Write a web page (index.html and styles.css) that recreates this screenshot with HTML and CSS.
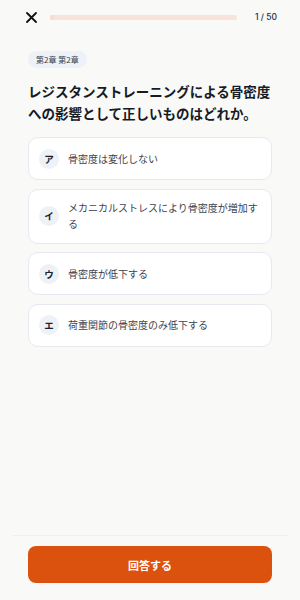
FILE: index.html
```html
<!DOCTYPE html>
<html lang="ja">
<head>
    <meta charset="UTF-8">
    <meta name="viewport" content="width=device-width, initial-scale=1.0">
    <title>問題</title>
    <link rel="stylesheet" href="styles.css">
</head>
<body>
    <div class="page">
        <header class="topbar">
            <button class="close" aria-label="閉じる">
                <svg width="11" height="11" viewBox="0 0 11 11"><path d="M1 1L10 10M10 1L1 10" stroke="#111" stroke-width="1.8" stroke-linecap="round"/></svg>
            </button>
            <div class="progress"><div class="progress-fill" style="width: 2%"></div></div>
            <span class="count">1 / 50</span>
        </header>

        <main class="content">
            <span class="chapter">第2章 第2章</span>
            <h1 class="question">レジスタンストレーニングによる骨密度への影響として正しいものはどれか。</h1>

            <ul class="options">
                <li class="option"><span class="mark">ア</span><span class="label">骨密度は変化しない</span></li>
                <li class="option"><span class="mark">イ</span><span class="label">メカニカルストレスにより骨密度が増加する</span></li>
                <li class="option"><span class="mark">ウ</span><span class="label">骨密度が低下する</span></li>
                <li class="option"><span class="mark">エ</span><span class="label">荷重関節の骨密度のみ低下する</span></li>
            </ul>
        </main>

        <footer class="footer">
            <button class="answer">回答する</button>
        </footer>
    </div>
</body>
</html>
```

FILE: styles.css
```css
* { box-sizing: border-box; }
body { margin: 0; background: #f9f9f7; font-family: "Noto Sans CJK JP", "Noto Sans", sans-serif; color: #1b2130; }
.page { width: 300px; height: 600px; display: flex; flex-direction: column; }

.topbar { display: flex; align-items: center; height: 34px; padding: 0 23px 0 25px; }
.close { border: none; background: none; padding: 0; width: 12px; height: 12px; display: flex; align-items: center; justify-content: center; }
.progress { flex: 1; height: 5px; margin: 0 18px 0 13px; background: #f8e3d8; border-radius: 3px; overflow: hidden; }
.progress-fill { height: 100%; background: #f8dccd; }
.count { font-family: "Inter", "Noto Sans", sans-serif; font-size: 8.5px; font-weight: 500; color: #1e2a3c; }

.content { flex: 1; padding: 17px 28px 0; }
.chapter { display: block; width: fit-content; height: 17px; line-height: 17px; padding: 0 8px; border-radius: 9px; background: #eef1f7; font-size: 8px; color: #333a48; }
.question { margin: 12px 0 13px; font-size: 13.5px; line-height: 22px; font-weight: 700; color: #161b26; }

.options { list-style: none; margin: 0; padding: 0; display: flex; flex-direction: column; gap: 8.5px; }
.option { display: flex; align-items: center; gap: 9px; padding: 10.5px 12px 10.5px 10px; background: #fff; border: 1px solid #e6e9f0; border-radius: 10px; }
.mark { flex: none; width: 20px; height: 20px; border-radius: 50%; background: #eef1f6; display: flex; align-items: center; justify-content: center; font-size: 9.5px; font-weight: 700; color: #1b2130; }
.label { font-size: 10px; line-height: 16px; color: #3e4350; }

.footer { margin: 0 12px; padding: 10px 16px 17px; border-top: 1px solid #efefec; }
.answer { width: 100%; height: 37px; border: none; border-radius: 8px; background: #db520f; color: #fff; font-family: "Noto Sans CJK JP", sans-serif; font-size: 11px; font-weight: 700; }
```
